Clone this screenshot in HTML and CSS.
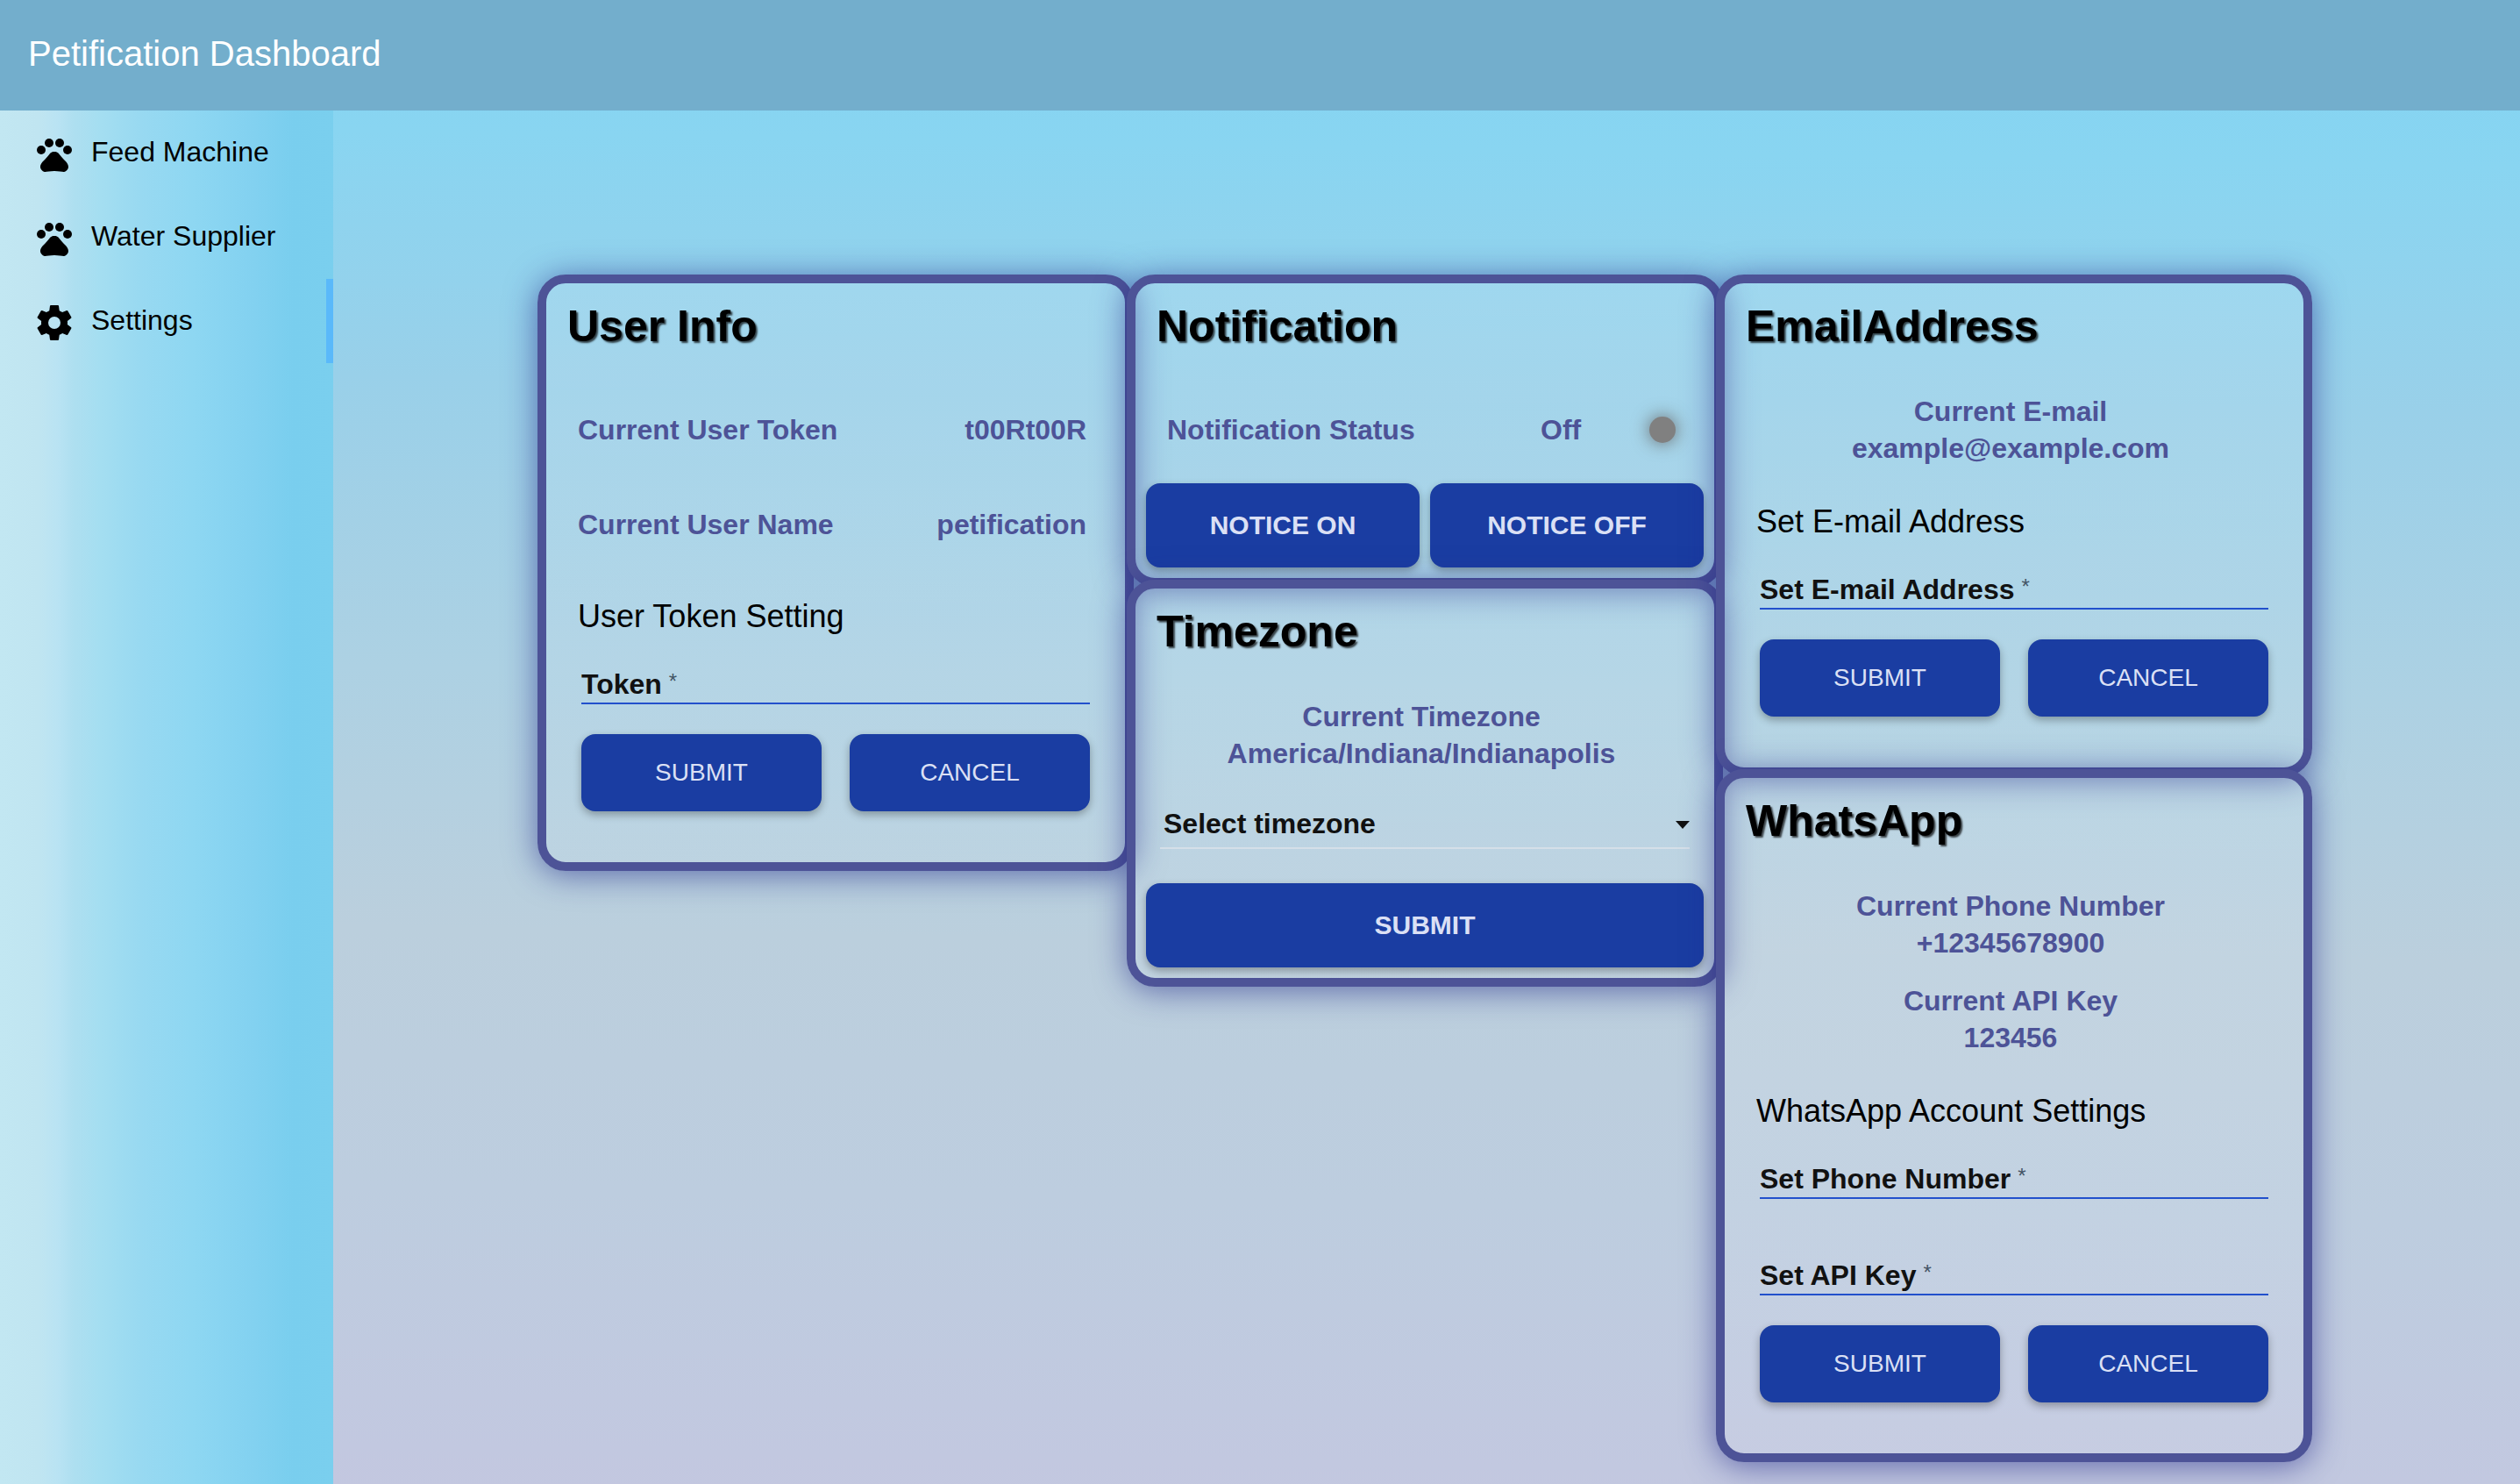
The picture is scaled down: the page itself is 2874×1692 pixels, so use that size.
FILE: index.html
```html
<!DOCTYPE html>
<html lang="en">
<head>
<meta charset="utf-8">
<title>Petification Dashboard</title>
<link rel="stylesheet" href="styles.css">
</head>
<body>
<header class="topbar"><h1 class="topbar-title">Petification Dashboard</h1></header>
<div class="layout">
  <nav class="sidebar" aria-label="Main">
    <a class="nav-item" href="#feed">
      <svg class="nav-icon" viewBox="0 0 24 24" aria-hidden="true"><circle cx="4.5" cy="9.5" r="2.5"/><circle cx="9" cy="5.5" r="2.5"/><circle cx="15" cy="5.5" r="2.5"/><circle cx="19.5" cy="9.5" r="2.5"/><path d="M17.34 14.86c-.87-1.02-1.6-1.89-2.48-2.91-.46-.54-1.05-1.08-1.75-1.32-.11-.04-.22-.07-.33-.09-.25-.04-.52-.04-.78-.04s-.53 0-.79.05c-.11.02-.22.05-.33.09-.7.24-1.28.78-1.75 1.32-.87 1.02-1.6 1.89-2.48 2.91-1.31 1.31-2.92 2.76-2.62 4.79.29 1.02 1.02 2.03 2.33 2.32.73.15 3.06-.44 5.54-.44h.18c2.48 0 4.81.58 5.54.44 1.31-.29 2.04-1.31 2.33-2.32.31-2.04-1.3-3.49-2.61-4.8z"/></svg>
      <span>Feed Machine</span>
    </a>
    <a class="nav-item" href="#water">
      <svg class="nav-icon" viewBox="0 0 24 24" aria-hidden="true"><circle cx="4.5" cy="9.5" r="2.5"/><circle cx="9" cy="5.5" r="2.5"/><circle cx="15" cy="5.5" r="2.5"/><circle cx="19.5" cy="9.5" r="2.5"/><path d="M17.34 14.86c-.87-1.02-1.6-1.89-2.48-2.91-.46-.54-1.05-1.08-1.75-1.32-.11-.04-.22-.07-.33-.09-.25-.04-.52-.04-.78-.04s-.53 0-.79.05c-.11.02-.22.05-.33.09-.7.24-1.28.78-1.75 1.32-.87 1.02-1.6 1.89-2.48 2.91-1.31 1.31-2.92 2.76-2.62 4.79.29 1.02 1.02 2.03 2.33 2.32.73.15 3.06-.44 5.54-.44h.18c2.48 0 4.81.58 5.54.44 1.31-.29 2.04-1.31 2.33-2.32.31-2.04-1.3-3.49-2.61-4.8z"/></svg>
      <span>Water Supplier</span>
    </a>
    <a class="nav-item nav-item-active" href="#settings" aria-current="page">
      <svg class="nav-icon" viewBox="0 0 24 24" aria-hidden="true"><path d="M12 15.5A3.5 3.5 0 0 1 8.5 12 3.5 3.5 0 0 1 12 8.5a3.5 3.5 0 0 1 3.5 3.5 3.5 3.5 0 0 1-3.5 3.5m7.43-2.53c.04-.32.07-.64.07-.97s-.03-.66-.07-1l2.11-1.63c.19-.15.24-.42.12-.64l-2-3.46c-.12-.22-.39-.31-.61-.22l-2.49 1c-.52-.39-1.06-.73-1.69-.98l-.37-2.65A.506.506 0 0 0 14 2h-4c-.25 0-.46.18-.5.42l-.37 2.65c-.63.25-1.17.59-1.69.98l-2.49-1c-.22-.09-.49 0-.61.22l-2 3.46c-.13.22-.07.49.12.64L4.57 11c-.04.34-.07.67-.07 1s.03.65.07.97l-2.11 1.66c-.19.15-.25.42-.12.64l2 3.46c.12.22.39.3.61.22l2.49-1.01c.52.4 1.06.74 1.69.99l.37 2.65c.04.24.25.42.5.42h4c.25 0 .46-.18.5-.42l.37-2.65c.63-.26 1.17-.59 1.69-.99l2.49 1.01c.22.08.49 0 .61-.22l2-3.46c.12-.22.07-.49-.12-.64z"/></svg>
      <span>Settings</span>
    </a>
  </nav>
  <main class="content">
    <div class="column">
      <section class="card">
        <h2 class="card-title">User Info</h2>
        <dl>
          <div class="fact-row"><dt>Current User Token</dt><dd>t00Rt00R</dd></div>
          <div class="fact-row"><dt>Current User Name</dt><dd>petification</dd></div>
        </dl>
        <form class="form">
          <h3 class="form-title">User Token Setting</h3>
          <div class="field"><label for="token">Token</label><span class="required">*</span><input id="token" type="text" required></div>
          <div class="actions"><button class="btn" type="button">SUBMIT</button><button class="btn" type="button">CANCEL</button></div>
        </form>
      </section>
    </div>
    <div class="column">
      <section class="card">
        <h2 class="card-title">Notification</h2>
        <div class="status-row"><span>Notification Status</span><span>Off</span><span class="status-dot"></span></div>
        <div class="wide-actions"><button class="btn btn-wide" type="button">NOTICE ON</button><button class="btn btn-wide" type="button">NOTICE OFF</button></div>
      </section>
      <section class="card">
        <h2 class="card-title">Timezone</h2>
        <dl class="stacked"><dt>Current Timezone</dt><dd>America/Indiana/Indianapolis</dd></dl>
        <div class="select-wrap">
          <select class="select" aria-label="Select timezone"><option>Select timezone</option></select>
          <svg class="select-arrow" viewBox="0 0 16 9" aria-hidden="true"><path d="M0 0h16L8 9z"/></svg>
        </div>
        <div class="wide-actions"><button class="btn btn-wide" type="button">SUBMIT</button></div>
      </section>
    </div>
    <div class="column">
      <section class="card">
        <h2 class="card-title">EmailAddress</h2>
        <dl class="stacked"><dt>Current E-mail</dt><dd>example@example.com</dd></dl>
        <form class="form">
          <h3 class="form-title">Set E-mail Address</h3>
          <div class="field"><label for="email">Set E-mail Address</label><span class="required">*</span><input id="email" type="email" required></div>
          <div class="actions"><button class="btn" type="button">SUBMIT</button><button class="btn" type="button">CANCEL</button></div>
        </form>
      </section>
      <section class="card">
        <h2 class="card-title">WhatsApp</h2>
        <dl class="stacked"><dt>Current Phone Number</dt><dd>+12345678900</dd></dl>
        <dl class="stacked"><dt>Current API Key</dt><dd>123456</dd></dl>
        <form class="form">
          <h3 class="form-title">WhatsApp Account Settings</h3>
          <div class="field"><label for="phone">Set Phone Number</label><span class="required">*</span><input id="phone" type="tel" required></div>
          <div class="field"><label for="apikey">Set API Key</label><span class="required">*</span><input id="apikey" type="text" required></div>
          <div class="actions"><button class="btn" type="button">SUBMIT</button><button class="btn" type="button">CANCEL</button></div>
        </form>
      </section>
    </div>
  </main>
</div>
</body>
</html>
```
FILE: styles.css
```css
*, *::before, *::after { box-sizing: border-box; }

:root {
  --indigo: #4d5397;
  --navy: #1a3da2;
}

body {
  margin: 0;
  min-height: 100vh;
  display: flex;
  flex-direction: column;
  font-family: "Liberation Sans", Arial, sans-serif;
  font-size: 32px;
  line-height: 42px;
  color: #000;
  background: linear-gradient(181deg, #81d3f3 0%, #89d5f1 11%, #99d0e9 27%, #add1e3 46%, #bbcfdd 63%, #bdcddf 80%, #c2c8e0 97%, #c3c7e0 100%);
}

h1, h2, h3, dl, dd { margin: 0; }

.topbar {
  height: 126px;
  padding: 0 32px;
  display: flex;
  align-items: center;
  background: #73aecc;
}
.topbar-title {
  padding-bottom: 4px;
  font-size: 40px;
  font-weight: 400;
  color: #fff;
}

.layout { flex: 1; display: flex; }

.sidebar {
  width: 380px;
  flex-shrink: 0;
  background: linear-gradient(90deg, #c2e7f2 0, #c0e5f1 44px, #b9e3f3 66px, #aedff0 84px, #a4def1 115px, #98d9f1 160px, #8ed7f2 220px, #82d1f0 290px, #79ceee 335px, #7acfee 380px);
}
.nav-item {
  height: 96px;
  padding: 4px 0 0 38px;
  display: flex;
  align-items: center;
  gap: 18px;
  color: #000;
  text-decoration: none;
}
.nav-item span { padding-bottom: 6px; }
.nav-item-active { border-right: 8px solid #5ab9fa; }
.nav-icon { width: 48px; height: 48px; }

.content {
  flex: 1;
  padding: 187px 4px 27px 0;
  display: flex;
  justify-content: center;
  align-items: flex-start;
}
.column {
  width: 680px;
  margin-right: -8px;
  display: flex;
  flex-direction: column;
}
.column:last-child { margin-right: 0; }

.card {
  margin-bottom: -8px;
  padding: 24px 12px 12px;
  border: 10px solid var(--indigo);
  border-radius: 32px;
  background: linear-gradient(180deg, rgba(255, 255, 255, .12), rgba(255, 255, 255, .08));
  box-shadow: 0 4px 36px rgba(31, 38, 135, .6);
}
.card:last-child { margin-bottom: 0; }
.card-title {
  margin: 0 0 39px;
  padding-left: 12px;
  font-size: 50px;
  line-height: 50px;
  text-shadow: 2px 2px 2px rgba(0, 0, 0, .7);
}

.fact-row, .stacked, .status-row {
  height: 108px;
  font-weight: 700;
  color: var(--indigo);
}
.fact-row {
  padding: 0 32px 0 24px;
  display: flex;
  align-items: center;
  justify-content: space-between;
}
.stacked {
  padding: 12px 8px 0 0;
  text-align: center;
}

.status-row {
  padding: 0 32px 0 24px;
  display: grid;
  grid-template-columns: 1fr 124px 30px;
  align-items: center;
}
.status-dot {
  width: 30px;
  height: 30px;
  border-radius: 50%;
  background: #808080;
  box-shadow: 0 0 20px #666;
}

.form { padding: 30px 28px 46px; }
.form-title {
  margin: 0 0 23px -4px;
  font-size: 36px;
  font-weight: 400;
}
.field {
  display: grid;
  grid-template-columns: auto 1fr;
  column-gap: 8px;
  align-items: end;
}
.field + .field { margin-top: 54px; }
.field label {
  grid-area: 1 / 1;
  padding-bottom: 2px;
  font-weight: 700;
  color: #111;
}
.required {
  grid-area: 1 / 2;
  padding-bottom: 2px;
  font-size: 24px;
  line-height: 48px;
  color: #456;
}
.field input {
  grid-area: 1 / 1 / 2 / 3;
  width: 100%;
  height: 56px;
  padding: 0;
  border: 0;
  border-bottom: 2px solid #2250cc;
  background: none;
  font: inherit;
}
.actions {
  margin-top: 34px;
  display: grid;
  grid-template-columns: 1fr 1fr;
  gap: 32px;
}
.wide-actions {
  margin-top: 7px;
  display: grid;
  grid-auto-flow: column;
  grid-auto-columns: 1fr;
  gap: 12px;
}
.btn {
  height: 88px;
  border: 0;
  border-radius: 16px;
  background: var(--navy);
  color: #dbe0f5;
  font: 400 28px/32px "Liberation Sans", Arial, sans-serif;
  box-shadow: 0 4px 10px rgba(0, 0, 0, .3);
}
.btn-wide {
  height: 96px;
  font-size: 30px;
  font-weight: 700;
}

.select-wrap {
  margin: 20px 16px 39px;
  display: grid;
  align-items: center;
}
.select {
  grid-area: 1 / 1;
  appearance: none;
  width: 100%;
  height: 56px;
  padding: 0 4px;
  border: 0;
  border-bottom: 2px solid #d5dfe8;
  background: none;
  font: 700 32px/42px "Liberation Sans", Arial, sans-serif;
  color: #111;
}
.select-arrow {
  grid-area: 1 / 1;
  justify-self: end;
  width: 16px;
  height: 9px;
  fill: #111;
  pointer-events: none;
}
```
